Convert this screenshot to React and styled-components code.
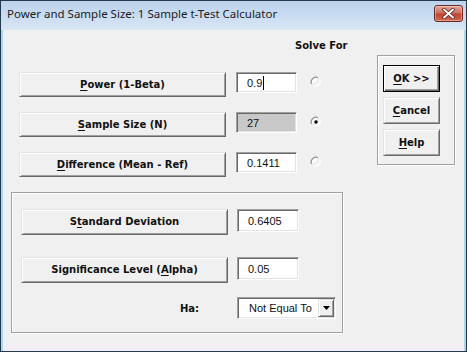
import React from 'react';
import styled, { createGlobalStyle } from 'styled-components';

const GlobalStyle = createGlobalStyle`
  html, body {
    margin: 0;
    padding: 0;
    background: #f0f0f0;
  }
  * {
    box-sizing: border-box;
  }
`;

const Window = styled.div`
  width: 467px;
  height: 352px;
  border: 1px solid #24384e;
  background: #a8d6ea;
  display: flex;
  flex-direction: column;
  overflow: hidden;
`;

const TitleBar = styled.div`
  height: 29px;
  flex: none;
  display: flex;
  align-items: flex-start;
  justify-content: space-between;
  background: linear-gradient(to bottom, #bcd3ed 0%, #c9dcf1 50%, #d9e6f4 100%);
`;

const Title = styled.div`
  padding: 5px 0 0 6px;
  font-family: 'Noto Sans', 'Open Sans', sans-serif;
  font-size: 11.5px;
  color: #1b1b1b;
  white-space: nowrap;
`;

const CloseButton = styled.div`
  width: 29px;
  height: 17px;
  margin: 4px 3px 0 0;
  border: 1px solid #6b2a22;
  border-radius: 3px;
  background: linear-gradient(to bottom, #e6a596 0%, #d0705f 45%, #c0432f 55%, #d46a52 100%);
  box-shadow: inset 0 0 0 1px rgba(255, 255, 255, 0.35);
  display: flex;
  align-items: center;
  justify-content: center;
`;

const Body = styled.div`
  flex: 1;
  margin: 0 2px;
  background: #f0f0f0;
  border-bottom: 7px solid #f3eef3;
  display: flex;
  align-items: flex-start;
`;

const LeftColumn = styled.div`
  width: 332px;
  margin-left: 8px;
  display: flex;
  flex-direction: column;
`;

const Header = styled.div`
  height: 42px;
  padding: 10px 0 0 284px;
  font-family: 'DejaVu Sans', sans-serif;
  font-size: 10px;
  font-weight: bold;
  color: #111;
  white-space: nowrap;
`;

const SolveRows = styled.div`
  display: flex;
  flex-direction: column;
  gap: 15px;
  padding-left: 8px;
`;

const Row = styled.div`
  display: flex;
  align-items: flex-start;
  gap: ${(p) => p.$gap || 10}px;
`;

const Button = styled.div`
  width: ${(p) => p.$width}px;
  height: ${(p) => p.$height}px;
  flex: none;
  display: flex;
  align-items: center;
  justify-content: center;
  background: #f0f0f0;
  border: 1px solid;
  border-color: ${(p) => (p.$default ? '#000' : '#e3e3e3 #696969 #696969 #e3e3e3')};
  box-shadow: ${(p) =>
    p.$default
      ? 'inset 1px 1px #fff, inset -1px -1px #696969, inset -2px -2px #a0a0a0'
      : 'inset 1px 1px #fff, inset -1px -1px #a0a0a0'};
  font-family: 'DejaVu Sans', sans-serif;
  font-size: 10px;
  font-weight: bold;
  color: #111;
  white-space: nowrap;
  padding-bottom: 1px;

  u {
    text-decoration: underline;
    text-underline-offset: 2px;
  }
`;

const Field = styled.div`
  width: ${(p) => p.$width}px;
  height: ${(p) => p.$height}px;
  flex: none;
  display: flex;
  align-items: center;
  padding-left: 10px;
  background: ${(p) => (p.$disabled ? '#c8c8c8' : '#fff')};
  border: 1px solid;
  border-color: #a0a0a0 #fff #fff #a0a0a0;
  box-shadow: inset 1px 1px #696969, inset -1px -1px #e3e3e3;
  font-family: 'Liberation Sans', Arial, sans-serif;
  font-size: 11px;
  color: #111;
`;

const Caret = styled.span`
  display: inline-block;
  width: 1px;
  height: 14px;
  margin-left: 1px;
  background: #000;
`;

const RadioWrap = styled.div`
  width: 12px;
  height: 12px;
  margin: 4px 0 0 ${(p) => p.$offset || 3}px;
  display: flex;
`;

const GroupBox = styled.div`
  border: 1px solid #a0a0a0;
  box-shadow: 1px 1px 0 #fff, inset 1px 1px 0 #fff;
  display: flex;
  flex-direction: column;
`;

const LowerGroup = styled(GroupBox)`
  margin-top: 15px;
  height: 141px;
  padding: 16px 0 0 9px;
`;

const LowerRows = styled.div`
  display: flex;
  flex-direction: column;
  gap: 22px;
`;

const HaRow = styled.div`
  display: flex;
  align-items: center;
  gap: 9px;
  margin-top: -8px;
`;

const HaLabel = styled.div`
  width: 207px;
  padding-right: 29px;
  text-align: right;
  font-family: 'DejaVu Sans', sans-serif;
  font-size: 10px;
  font-weight: bold;
  color: #111;
`;

const Combo = styled(Field)`
  padding-left: 11px;
  padding-right: 1px;
  justify-content: space-between;
`;

const ComboArrow = styled.div`
  width: 16px;
  height: 18px;
  background: #f0f0f0;
  border: 1px solid;
  border-color: #e3e3e3 #696969 #696969 #e3e3e3;
  box-shadow: inset 1px 1px #fff, inset -1px -1px #a0a0a0;
  display: flex;
  align-items: center;
  justify-content: center;
`;

const ActionGroup = styled(GroupBox)`
  width: 78px;
  height: 110px;
  margin: 25px 0 0 34px;
  padding: 9px 0 0 5px;
  gap: 5px;
`;

function Radio({ checked }) {
  return (
    <svg width="12" height="12" viewBox="0 0 12 12">
      <circle cx="6" cy="6" r="5" fill="#fafafa" />
      <path d="M1.5 8 A5 5 0 0 1 8 1.5" fill="none" stroke="#8a8a8a" strokeWidth="1.2" />
      <path d="M8 1.5 A5 5 0 0 1 1.5 8" fill="none" stroke="#e2e2e2" strokeWidth="1.2" />
      {checked && <circle cx="6" cy="6" r="1.7" fill="#000" />}
    </svg>
  );
}

function CloseGlyph() {
  return (
    <svg width="13" height="11" viewBox="0 0 13 11">
      <path d="M2 1.5 L11 9.5 M11 1.5 L2 9.5" stroke="#5a1d16" strokeWidth="3.6" strokeLinecap="round" />
      <path d="M2 1.5 L11 9.5 M11 1.5 L2 9.5" stroke="#fff" strokeWidth="2" strokeLinecap="round" />
    </svg>
  );
}

function DownArrow() {
  return (
    <svg width="7" height="4" viewBox="0 0 7 4">
      <path d="M0 0 H7 L3.5 4 Z" fill="#000" />
    </svg>
  );
}

const solveRows = [
  { key: 'power', label: <><u>P</u>ower (1-Beta)</>, value: '0.9', caret: true },
  { key: 'n', label: <><u>S</u>ample Size (N)</>, value: '27', disabled: true, checked: true },
  { key: 'diff', label: <><u>D</u>ifference (Mean - Ref)</>, value: '0.1411' },
];

export default function App() {
  return (
    <>
      <GlobalStyle />
      <Window>
        <TitleBar>
          <Title>Power and Sample Size: 1 Sample t-Test Calculator</Title>
          <CloseButton>
            <CloseGlyph />
          </CloseButton>
        </TitleBar>
        <Body>
          <LeftColumn>
            <Header>Solve For</Header>
            <SolveRows>
              {solveRows.map((r) => (
                <Row key={r.key}>
                  <Button $width={207} $height={25}>{r.label}</Button>
                  <Field $width={61} $height={21} $disabled={r.disabled}>
                    {r.value}
                    {r.caret && <Caret />}
                  </Field>
                  <RadioWrap $offset={3}>
                    <Radio checked={r.checked} />
                  </RadioWrap>
                </Row>
              ))}
            </SolveRows>
            <LowerGroup>
              <LowerRows>
                <Row $gap={9}>
                  <Button $width={207} $height={26}>
                    S<u>t</u>andard Deviation
                  </Button>
                  <Field $width={62} $height={23}>0.6405</Field>
                </Row>
                <Row $gap={9}>
                  <Button $width={207} $height={26}>
                    Significance Level (<u>A</u>lpha)
                  </Button>
                  <Field $width={62} $height={23}>0.05</Field>
                </Row>
                <HaRow>
                  <HaLabel>Ha:</HaLabel>
                  <Combo $width={99} $height={22}>
                    Not Equal To
                    <ComboArrow>
                      <DownArrow />
                    </ComboArrow>
                  </Combo>
                </HaRow>
              </LowerRows>
            </LowerGroup>
          </LeftColumn>
          <ActionGroup>
            <Button $width={57} $height={27} $default>
              <u>O</u>K &gt;&gt;
            </Button>
            <Button $width={57} $height={27}>
              <u>C</u>ancel
            </Button>
            <Button $width={57} $height={27}>
              <u>H</u>elp
            </Button>
          </ActionGroup>
        </Body>
      </Window>
    </>
  );
}
